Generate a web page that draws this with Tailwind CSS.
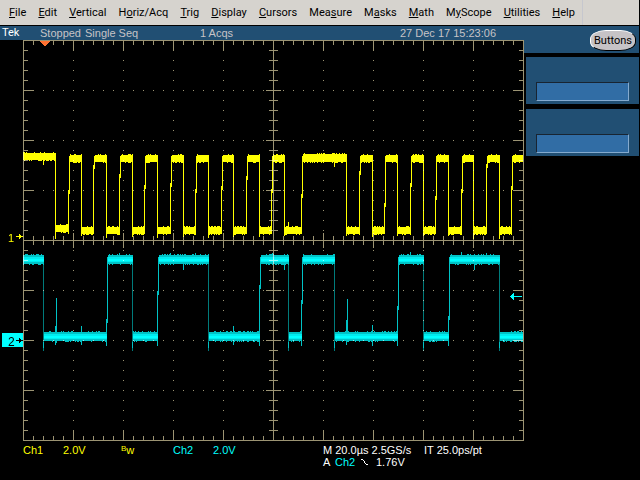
<!DOCTYPE html>
<html lang="en">
<head>
  <meta charset="UTF-8">
  <meta name="viewport" content="width=device-width, initial-scale=1.0">
  <title>Tek Oscilloscope</title>
  <script src="https://cdn.jsdelivr.net/npm/@tailwindcss/browser@4"></script>
</head>
<body class="bg-black min-h-screen pr-px font-['Liberation_Sans',sans-serif] text-[11px] leading-3">
  <!-- Menu bar -->
  <nav class="flex h-[25px] bg-[#d6d3ce] text-black font-[Roboto,sans-serif]">
    <div class="flex flex-1 items-center justify-between pl-[9px] pr-[7px]">
      <button><u>F</u>ile</button>
      <button><u>E</u>dit</button>
      <button><u>V</u>ertical</button>
      <button>H<u>o</u>riz/Acq</button>
      <button><u>T</u>rig</button>
      <button><u>D</u>isplay</button>
      <button><u>C</u>ursors</button>
      <button>Mea<u>s</u>ure</button>
      <button>M<u>a</u>sks</button>
      <button><u>M</u>ath</button>
      <button>M<u>y</u>Scope</button>
      <button><u>U</u>tilities</button>
      <button><u>H</u>elp</button>
    </div>
    <div class="w-[57px] border-l border-[#c6c7ce]"></div>
  </nav>

  <main class="grid grid-cols-[minmax(0,1fr)_115px] mt-px">
    <section>
      <!-- Acquisition status -->
      <div class="grid grid-cols-[38px_160px_200px_1fr] items-center h-[14px] pl-[2px] bg-[#214f73] text-[#c6c3c6] whitespace-nowrap">
        <span class="text-white font-[Roboto,sans-serif]">Tek</span>
        <span class="flex gap-1"><span>Stopped</span><span>Single Seq</span></span>
        <span>1 Acqs</span>
        <span>27 Dec 17 15:23:06</span>
      </div>

      <!-- Graticule and traces -->
      <svg viewBox="0 40 524 401" class="block w-full h-auto isolate" shape-rendering="crispEdges" fill="none">
        <path id="ch1" stroke="#ffff00"/>
        <path id="ch2Edge" stroke="#007b7b"/>
        <path id="ch2Rise" stroke="#00c3c6"/>
        <path id="ch2Outer" stroke="#00c3c6"/>
        <path id="ch2Core" stroke="#00ebef"/>
        <path id="ch2Center" stroke="#00ffff"/>
        <path id="grid" class="mix-blend-screen" stroke="#9c9473"/>
        <path d="M40 41h10v1h-1v1h-1v1h-1v1h-1v1h-2v-1h-1v-1h-1v-1h-1v-1h-1z" fill="#ff7131"/>
        <text x="8" y="242" fill="#ffff00">1</text>
        <path d="M16 236h3v-2h1v1h1v1h2v1h-2v1h-1v1h-1v-2h-3z" fill="#ffff00"/>
        <path d="M2 333h21v14h-21z" fill="#00ffff"/>
        <text x="8" y="346" fill="#000000" class="text-[12px]">2</text>
        <path d="M16 340h3v-2h1v1h1v1h2v1h-2v1h-1v1h-1v-2h-3z" fill="#000000"/>
        <path d="M510 296h1v-1h1v-1h1v-1h1v3h8v1h-8v3h-1v-1h-1v-1h-1v-1h-1z" fill="#00ffff"/>
      </svg>

      <!-- Readouts -->
      <div class="grid grid-cols-[40px_58px_52px_40px_110px_1fr] pl-[23px] pt-[3px] whitespace-nowrap text-[#ffff00]">
        <span>Ch1</span>
        <span>2.0V</span>
        <span class="flex"><span class="text-[8px] leading-[10px]">B</span><span>w</span></span>
        <span class="text-[#00ffff]">Ch2</span>
        <span class="text-[#00ffff]">2.0V</span>
        <div class="text-white">
          <p class="grid grid-cols-[101px_1fr]"><span>M 20.0µs 2.5GS/s</span><span>IT 25.0ps/pt</span></p>
          <p class="grid grid-cols-[12px_26px_15px_1fr] items-center">
            <span>A</span>
            <span class="text-[#00ffff]">Ch2</span>
            <svg viewBox="0 0 7 7" class="w-[7px] h-[7px]" shape-rendering="crispEdges" fill="#ffffff"><path d="M0 0h2v1h1v1h1v2h1v1h2v1h-2v-1h-1v-1h-1v-2h-1v-1h-2z"/></svg>
            <span>1.76V</span>
          </p>
        </div>
      </div>
    </section>

    <!-- Side panel -->
    <aside>
      <div class="flex justify-end h-[27px] pt-1 pr-[3px] bg-[#214f73]">
        <button class="w-[46px] h-[21px] rounded-[16px/9px] border border-t-white border-l-white border-b-black border-r-black bg-[#c6c3c6] text-black font-[Roboto,sans-serif] leading-[18px]">Buttons</button>
      </div>
      <div class="flex flex-col gap-[5px] pt-1 pl-[2px]">
        <div class="h-[47px] px-[10px] pt-[25px] bg-[#214f73]">
          <input type="text" aria-label="Knob 1" class="block w-full h-[19px] border border-t-[#182431] border-l-[#182431] border-b-[#84aace] border-r-[#84aace] bg-[#316da5] text-white px-1">
        </div>
        <div class="h-[47px] px-[10px] pt-[25px] bg-[#214f73]">
          <input type="text" aria-label="Knob 2" class="block w-full h-[19px] border border-t-[#182431] border-l-[#182431] border-b-[#84aace] border-r-[#84aace] bg-[#316da5] text-white px-1">
        </div>
      </div>
    </aside>
  </main>

  <script>
    const X0 = 23, X1 = 523, Y0 = 40, Y1 = 440, CX = 273, CY = 240;

    // small repeatable noise source
    let seed = 7;
    function rnd() {
      seed = (seed * 16807) % 2147483647;
      return seed / 2147483647;
    }
    const vline = (x, a, b) => `M${x + 0.5} ${a}V${b}`;
    const hline = (y, a, b) => `M${a} ${y + 0.5}H${b}`;
    const set = (id, d) => document.getElementById(id).setAttribute('d', d);

    // Graticule
    let g = `M${X0 + 0.5} ${Y0 + 0.5}H${X1 + 0.5}V${Y1 + 0.5}H${X0 + 0.5}z`;
    g += vline(CX, Y0, Y1) + hline(CY, X0, X1);
    for (let x = X0 + 10; x < X1; x += 10) {
      const major = (x - X0) % 50 === 0;
      const len = major ? 10 : 4;
      const mid = major ? 7 : 4;
      if (x !== CX) {
        g += vline(x, Y0 + 1, Y0 + 1 + len) + vline(x, Y1 - len, Y1) + vline(x, CY - mid, CY + mid + 1);
      }
      for (let y = Y0 + 10; y < Y1; y += 10) {
        if ((major || (y - Y0) % 50 === 0) && x !== CX && y !== CY) g += hline(y, x, x + 1);
      }
    }
    for (let y = Y0 + 10; y < Y1; y += 10) {
      const major = (y - Y0) % 50 === 0;
      const len = major ? 10 : 4;
      const mid = major ? 7 : 4;
      if (y !== CY) {
        g += hline(y, X0 + 1, X0 + 1 + len) + hline(y, X1 - len, X1) + hline(y, CX - mid, CX + mid + 1);
      }
    }
    set('grid', g);

    // Channel 1: clock, x of each falling and rising edge
    const ch1 = [[55, 69], [81, 94], [106, 120], [132, 145], [157, 171], [183, 196], [208, 222], [233, 247], [259, 272],
      [284, 302], [346, 360], [372, 385], [397, 411], [423, 436], [448, 462], [473, 487], [499, 512]];
    let d1 = '', pos = X0;
    function band1(a, b, top, bottom) {
      for (let x = a; x < b; x++) {
        const t = rnd() < 0.35 ? 1 : 0, u = rnd() < 0.35 ? 1 : 0;
        d1 += vline(x, top - t, bottom + u);
      }
    }
    ch1.forEach(([fall, rise], i) => {
      const first = i === 0;
      band1(pos, fall + 1, first ? 153 : fall === 346 ? 154 : 155, first ? 160 : 162);
      d1 += vline(fall, 155, 236 + Math.round(rnd() * 3));
      band1(fall + 1, rise, first ? 225 : 227, first ? 232 : 234);
      const knee = 165 + Math.round(rnd() * 45);
      d1 += vline(rise - 1, knee - 2, 234) + vline(rise, 156, knee + 2);
      pos = rise + 1;
    });
    band1(pos, X1, 155, 162);
    d1 += vline(43, 160, 165) + vline(334, 161, 167) + vline(288, 222, 227);
    set('ch1', d1);

    // Channel 2: data, [falling edge, rising edge]
    const ch2 = [[43, 107], [132, 158], [208, 260], [288, 302], [334, 398], [423, 449], [499, X1]];
    let outer = '', core = '', center = '', edge = '', rise2 = '';
    function band2(a, b, mid) {
      for (let x = a; x < b; x++) {
        outer += vline(x, mid - 4 - (rnd() < 0.25), mid + 5 + (rnd() < 0.3));
      }
      core += hline(mid - 2, a, b) + hline(mid - 1, a, b) + hline(mid + 1, a, b) + hline(mid + 2, a, b);
      center += hline(mid, a, b) + hline(mid + 1, a, b);
    }
    pos = X0;
    ch2.forEach(([fall, rise]) => {
      band2(pos, fall + 1, 259);
      edge += vline(fall, 264, 351);
      rise2 += vline(fall, 342, 348);
      band2(fall + 1, rise, 336);
      if (rise < X1) {
        const knee = 280 + Math.round(rnd() * 40);
        rise2 += vline(rise - 1, knee, 346) + vline(rise, 257, knee + 4);
      }
      pos = rise + 1;
    });
    // crosstalk spikes
    [[56, 298, 343], [55, 326, 345], [81, 326, 345], [233, 326, 345], [347, 299, 342], [346, 320, 345], [372, 325, 346],
      [119, 253, 256], [170, 253, 256], [195, 253, 256], [272, 253, 256], [410, 252, 256], [461, 252, 256], [486, 253, 256],
      [183, 263, 270], [284, 263, 270], [474, 263, 270]].forEach(([x, a, b]) => { rise2 += vline(x, a, b); });
    set('ch2Outer', outer);
    set('ch2Core', core);
    set('ch2Center', center);
    set('ch2Edge', edge);
    set('ch2Rise', rise2);
  </script>
</body>
</html>
